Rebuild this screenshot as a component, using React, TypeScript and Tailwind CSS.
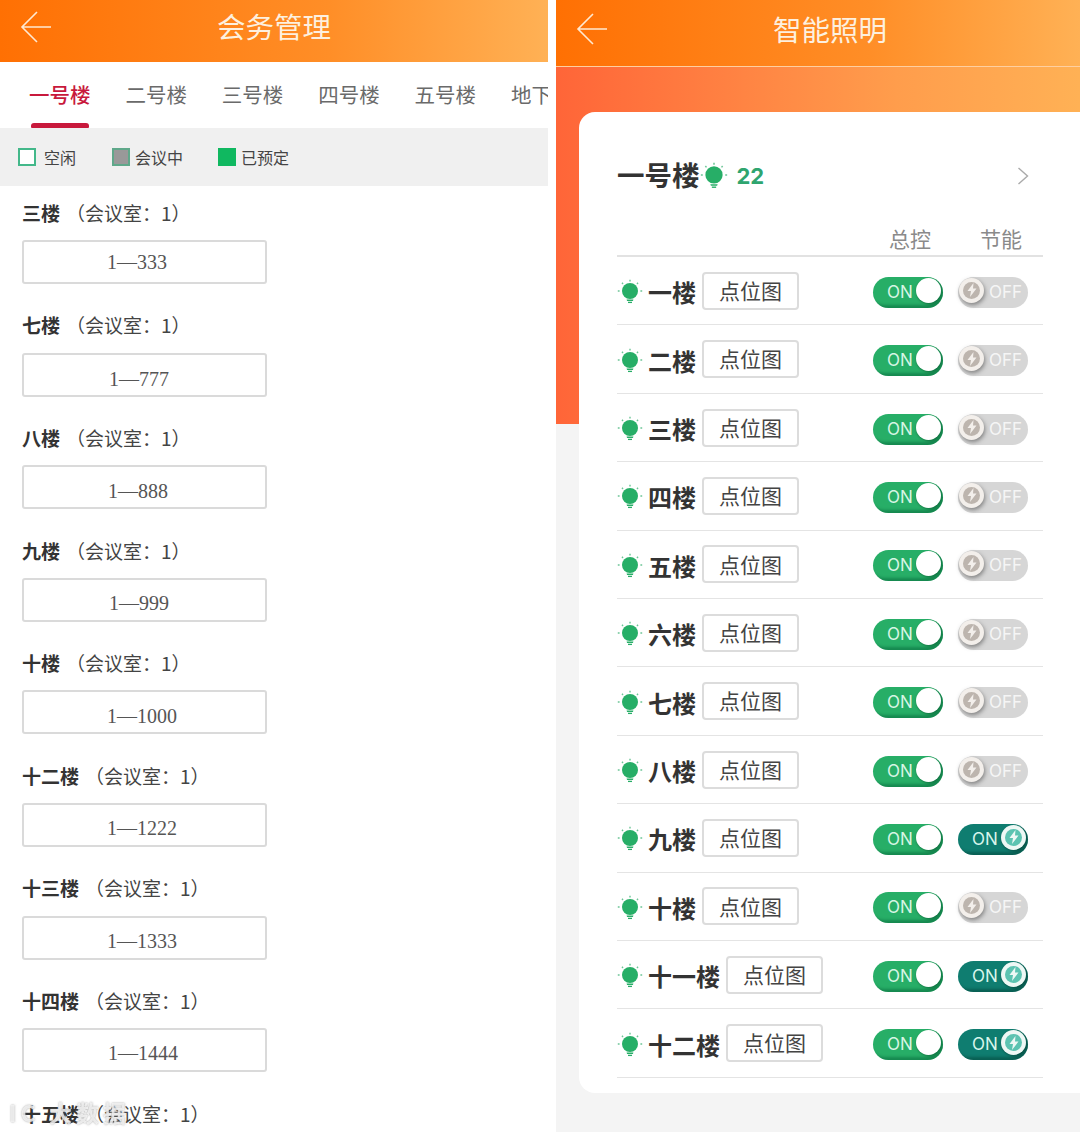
import React from "react";

const FONT = "font-['Noto_Sans_CJK_SC','Noto_Sans',sans-serif]";

const sections = [
  { name: "三楼", room: "1—333", pad: "pl-[83px]" },
  { name: "七楼", room: "1—777", pad: "pl-[85px] pt-[8px]" },
  { name: "八楼", room: "1—888", pad: "pl-[84px] pt-[7px]" },
  { name: "九楼", room: "1—999", pad: "pl-[85px] pt-[6px]" },
  { name: "十楼", room: "1—1000", pad: "pl-[83px] pt-[8px]" },
  { name: "十二楼", room: "1—1222", pad: "pl-[83px] pt-[6px]" },
  { name: "十三楼", room: "1—1333", pad: "pl-[83px] pt-[6px]" },
  { name: "十四楼", room: "1—1444", pad: "pl-[84px] pt-[6px]" },
];

const floors = [
  { name: "一楼", saving: false },
  { name: "二楼", saving: false },
  { name: "三楼", saving: false },
  { name: "四楼", saving: false },
  { name: "五楼", saving: false },
  { name: "六楼", saving: false },
  { name: "七楼", saving: false },
  { name: "八楼", saving: false },
  { name: "九楼", saving: true },
  { name: "十楼", saving: false },
  { name: "十一楼", saving: true },
  { name: "十二楼", saving: true },
];

function BackArrow() {
  return (
    <svg width="32" height="32" viewBox="0 0 32 32" fill="none" stroke="#ffe9d2" strokeWidth="1.6" className="shrink-0">
      <path d="M31 16H2M17 1 2 16l15 15" />
    </svg>
  );
}

function Bulb({ size = 26 }: { size?: number }) {
  return (
    <svg width={size} height={size} viewBox="0 0 26 26" fill="none" className="shrink-0">
      <circle cx="13" cy="12" r="8" fill="#27ae67" />
      <path d="M9.600 20.600h6.800l-.5 1.400H10.100z" fill="#27ae67" />
      <path d="M11 23.400h4" stroke="#27ae67" strokeWidth="1.300" />
      <path
        d="M13 .8v1.700M5 3.800l1 1.200M21 3.800 20 5M.8 12h1.800M23.400 12h1.800"
        stroke="#6cc596"
        strokeWidth="1.400"
      />
    </svg>
  );
}

function MasterToggle() {
  return (
    <div className="relative flex h-[31px] w-[70px] items-center rounded-full bg-[#27ae67] pl-[14px] shadow-[inset_-4px_-3px_3px_rgba(0,90,50,0.45)]">
      <span className="text-[17px] leading-none text-[#d8f5e4] font-['Inter',sans-serif]">ON</span>
      <span className="absolute right-[2px] top-[1px] size-[25px] rounded-full bg-white shadow-[0_1px_2px_rgba(0,60,30,0.4)]" />
    </div>
  );
}

function Bolt({ color }: { color: string }) {
  return (
    <svg width="12" height="14" viewBox="0 0 12 14">
      <path d="M7.500 0 1.500 8h3.500L4 14l6.500-8.500H7z" fill={color} />
    </svg>
  );
}

function SavingToggle({ on }: { on: boolean }) {
  if (on) {
    return (
      <div className="relative flex h-[31px] w-[70px] items-center rounded-full bg-[#0f7d70] pl-[14px] shadow-[inset_-4px_-3px_3px_rgba(0,50,40,0.4)]">
        <span className="text-[17px] leading-none text-[#d8f5ec] font-['Inter',sans-serif]">ON</span>
        <span className="absolute right-[2px] top-[1px] flex size-[25px] items-center justify-center rounded-full bg-[#eef8f5] shadow-[0_1px_2px_rgba(0,40,30,0.4)]">
          <span className="flex size-[17px] items-center justify-center rounded-full bg-[#5cc3b1]">
            <Bolt color="#eef8f5" />
          </span>
        </span>
      </div>
    );
  }
  return (
    <div className="relative flex h-[31px] w-[70px] items-center rounded-full bg-[#d6d6d6] pl-[31px]">
      <span className="text-[17px] leading-none text-[#f5f5f5] font-['Inter',sans-serif]">OFF</span>
      <span className="absolute left-[1px] top-[1px] flex size-[25px] items-center justify-center rounded-full bg-[#f3efeb] shadow-[1px_2px_4px_rgba(60,60,60,0.55)]">
        <span className="flex size-[17px] items-center justify-center rounded-full bg-[#bdb5ae]">
          <Bolt color="#f3efeb" />
        </span>
      </span>
    </div>
  );
}

function LeftPanel() {
  return (
    <div className="flex h-full w-[548px] shrink-0 flex-col overflow-hidden bg-white">
      <div className="flex h-[62px] shrink-0 items-center bg-[linear-gradient(90deg,#ff7003,#ff8e27_60%,#ffb155)] pl-[20px] pb-[9px]">
        <BackArrow />
        <div className="ml-[165px] whitespace-nowrap text-[28.500px] leading-none text-[#fdf0df]">
          会务管理
        </div>
      </div>
      <div className="flex h-[66px] shrink-0 overflow-hidden pl-[29px]">
        {["一号楼", "二号楼", "三号楼", "四号楼", "五号楼", "地下"].map((t, i) => (
          <div key={t} className="relative mr-[34.900px] h-full shrink-0 pt-[18px] text-[20.500px] leading-[28px] text-[#6a6a6a] first:font-medium first:text-[#c8193c]">
            {t}
            {i === 0 && (
              <span className="absolute bottom-0 left-[2px] right-[2px] h-[5px] rounded-t-[3px] rounded-b-[1px] bg-[#c8193c]" />
            )}
          </div>
        ))}
      </div>
      <div className="flex h-[58px] shrink-0 items-center whitespace-nowrap bg-[#f0f0f0] pl-[18px] text-[16px] text-[#444]">
        <span className="size-[18px] shrink-0 border-2 border-[#43b88a] bg-white" />
        <span className="ml-[8px] w-[32px]">空闲</span>
        <span className="ml-[36px] size-[18px] shrink-0 border-2 border-[#5fa88a] bg-[#999]" />
        <span className="ml-[5px] w-[48px]">会议中</span>
        <span className="ml-[35px] size-[18px] shrink-0 bg-[#10b860]" />
        <span className="ml-[5px]">已预定</span>
      </div>
      <div className="flex flex-col gap-[28.600px] pl-[22px] pt-[14px]">
        {sections.map((s) => (
          <div key={s.name}>
            <div className="flex h-[26px] items-center text-[19px] text-[#444]">
              <span className="font-bold text-[#333]">{s.name}</span>
              <span className="ml-[6px]">（会议室：1）</span>
            </div>
            <div className={`mt-[14px] flex h-[44px] w-[245px] items-center rounded-[3px] border-2 border-[#dadada] text-[20px] text-[#555] font-['Liberation_Serif',serif] ${s.pad}`}>
              {s.room}
            </div>
          </div>
        ))}
        <div className="flex h-[26px] items-center text-[19px] text-[#444]">
          <span className="font-bold text-[#333]">十五楼</span>
          <span className="ml-[6px]">（会议室：1）</span>
        </div>
      </div>
    </div>
  );
}

function RightPanel() {
  return (
    <div className="flex h-full min-w-0 flex-1 flex-col overflow-hidden bg-[#f4f4f4] bg-[linear-gradient(90deg,#ff6538,#ff9d4c_65%,#ffb155)] bg-[length:100%_424px] bg-no-repeat">
      <div className="flex h-[67px] shrink-0 items-center border-b border-[#ffcfa0] bg-[linear-gradient(90deg,#ff7003,#ff8e27_60%,#ffb155)] pl-[20px] pb-[8px]">
        <BackArrow />
        <div className="ml-[165px] whitespace-nowrap text-[28.500px] leading-none text-[#fdf0df]">智能照明</div>
      </div>
      <div className="ml-[23px] mt-[45px] h-[981px] w-[520px] shrink-0 rounded-[16px] bg-white pl-[38px] pr-[56px]">
        <div className="flex h-[104px] items-center pt-[24px]">
          <span className="mb-[3px] text-[27.500px] font-bold leading-none text-[#333]">一号楼</span>
          <Bulb size={28} />
          <span className="ml-[9px] text-[22px] font-bold leading-none text-[#2fa56f] font-['Inter',sans-serif]">22</span>
          <svg width="12" height="18" viewBox="0 0 12 18" fill="none" stroke="#aaa" strokeWidth="1.400" className="ml-auto mr-[14px]">
            <path d="m1.500 1 9 8-9 8" />
          </svg>
        </div>
        <div className="flex h-[41px] items-end border-b-2 border-[#e2e2e2] pb-[4px] text-[21px] leading-[26px] text-[#8a8a8a]">
          <span className="ml-[272px]">总控</span>
          <span className="ml-[49px]">节能</span>
        </div>
        {floors.map((f) => (
          <div key={f.name} className="flex h-[68.420px] items-center border-b border-[#e4e4e4] pt-[3px]">
            <Bulb />
            <span className="ml-[5px] text-[24px] font-bold leading-none text-[#333]">{f.name}</span>
            <span className="ml-[6px] mb-[3px] flex h-[38px] w-[97px] items-center justify-center rounded-[4px] border-2 border-[#dcdcdc] text-[21px] text-[#444]">
              点位图
            </span>
            <span className="ml-auto mr-[15px] flex gap-[15px]">
              <MasterToggle />
              <SavingToggle on={f.saving} />
            </span>
          </div>
        ))}
      </div>
    </div>
  );
}

export default function App() {
  return (
    <div className={`relative flex h-[1132px] w-[1080px] gap-[8px] overflow-hidden bg-white ${FONT}`}>
      <LeftPanel />
      <RightPanel />
      <span className="absolute left-[9px] top-[1101px] text-[23px] font-bold leading-none tracking-[4px] text-white/75 blur-[0.7px] [text-shadow:0_0_2px_rgba(120,120,120,0.7)]">
        IC 大数据
      </span>
    </div>
  );
}
